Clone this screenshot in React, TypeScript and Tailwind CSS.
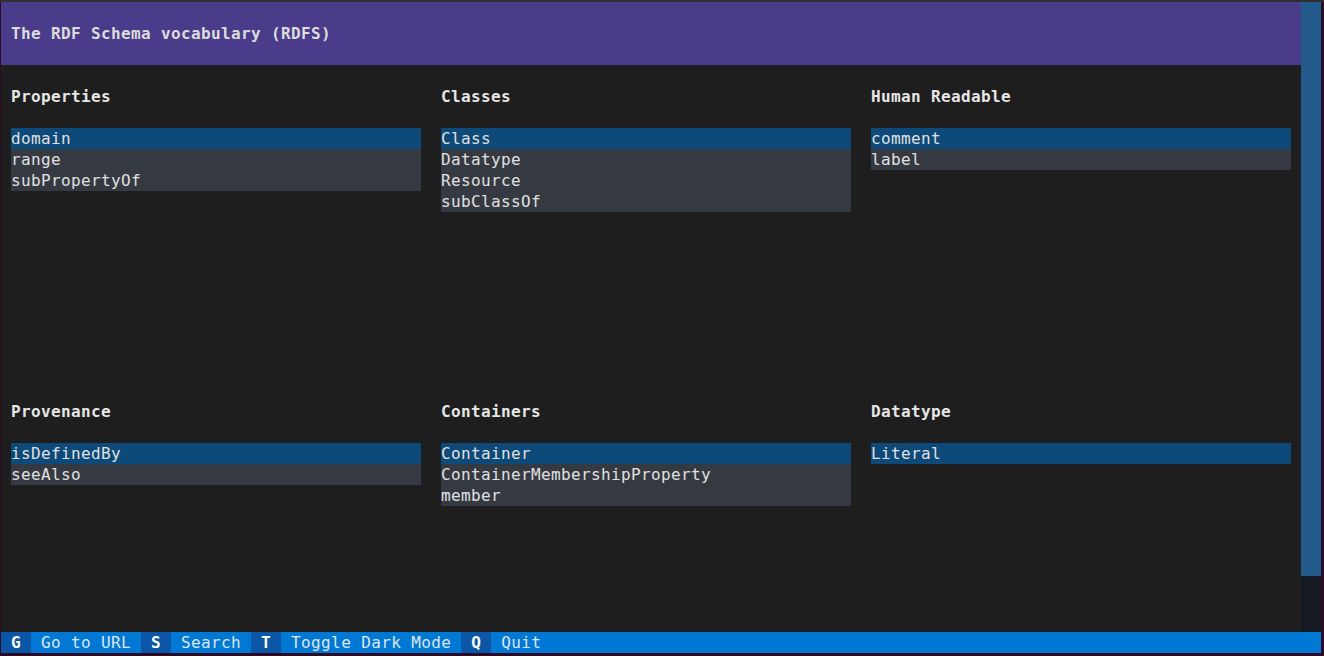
import React from "react";

const mono = "font-['DejaVu_Sans_Mono','Liberation_Mono',monospace] text-[16px] tracking-[0.37px] leading-[21px]";

const groups = [
    { title: "Properties", items: ["domain", "range", "subPropertyOf"] },
    { title: "Classes", items: ["Class", "Datatype", "Resource", "subClassOf"] },
    { title: "Human Readable", items: ["comment", "label"] },
    { title: "Provenance", items: ["isDefinedBy", "seeAlso"] },
    { title: "Containers", items: ["Container", "ContainerMembershipProperty", "member"] },
    { title: "Datatype", items: ["Literal"] },
];

const keys = [
    { key: "G", label: "Go to URL" },
    { key: "S", label: "Search" },
    { key: "T", label: "Toggle Dark Mode" },
    { key: "Q", label: "Quit" },
];

const Group: React.FC<{ title: string; items: string[] }> = ({ title, items }) => (
    <div className="flex flex-col">
        <div className="h-[21px] font-bold text-[#e6e6e6] whitespace-pre">{title}</div>
        <div className="h-[21px]" />
        <ul className="flex flex-col">
            {items.map((item, i) => (
                <li
                    key={item}
                    className={`h-[21px] whitespace-pre text-[#e0e0e0] ${i === 0 ? "bg-[#0d4a79]" : "bg-[#353a42]"}`}
                >
                    {item}
                </li>
            ))}
        </ul>
    </div>
);

export default function App() {
    return (
        <div className="w-[1324px] h-[656px] bg-[#2c0b24] flex flex-col overflow-hidden">
            <div className="h-[2px] bg-[#2f2f2f] shrink-0" />
            <div className={`ml-[1px] w-[1320px] h-[651px] flex flex-col ${mono}`}>
                <div className="flex h-[630px]">
                    <div className="w-[1300px] flex flex-col bg-[#1e1e1e]">
                        {/* header */}
                        <div className="h-[63px] bg-[#4a3c8a] px-[10px] pt-[21px]">
                            <span className="font-bold text-[#dcdcdc] whitespace-pre">The RDF Schema vocabulary (RDFS)</span>
                        </div>
                        {/* body */}
                        <div className="flex-1 pl-[10px] pt-[21px] grid grid-cols-[410px_410px_420px] grid-rows-[315px_1fr] gap-x-[20px]">
                            {groups.map((g) => (
                                <Group key={g.title} title={g.title} items={g.items} />
                            ))}
                        </div>
                    </div>
                    {/* scrollbar */}
                    <div className="w-[20px] flex flex-col bg-[#151a22]">
                        <div className="h-[574px] bg-[#235a8c]" />
                    </div>
                </div>
                {/* footer */}
                <div className="h-[21px] flex bg-[#0178d4]">
                    {keys.map((k) => (
                        <React.Fragment key={k.key}>
                            <span className="bg-[#0b56a6] font-bold text-white whitespace-pre">{` ${k.key} `}</span>
                            <span className="text-[#dde6f2] whitespace-pre">{` ${k.label} `}</span>
                        </React.Fragment>
                    ))}
                </div>
            </div>
        </div>
    );
}
